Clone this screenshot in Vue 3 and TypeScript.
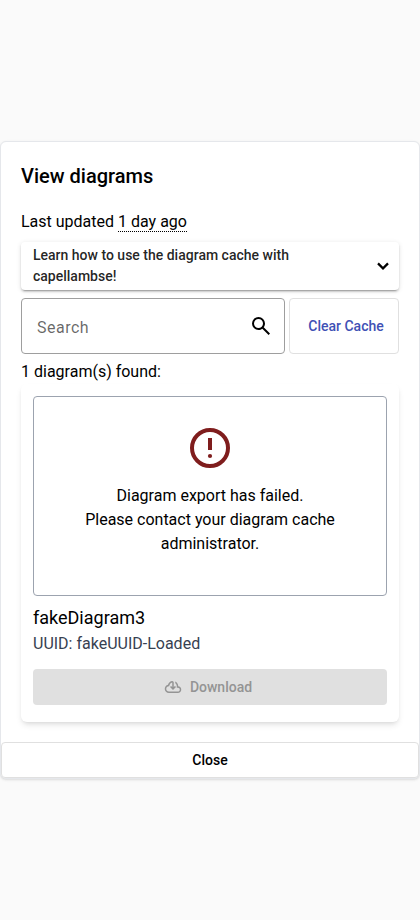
<script setup lang="ts">
import { ref } from 'vue'

interface Diagram {
  name: string
  uuid: string
}

const lastUpdated = ref('1 day ago')
const search = ref('')
const diagrams = ref<Diagram[]>([{ name: 'fakeDiagram3', uuid: 'fakeUUID-Loaded' }])
</script>

<template>
  <main class="page">
    <section class="dialog">
      <div class="content">
        <h2>View diagrams</h2>
        <p class="updated">Last updated <span class="time">{{ lastUpdated }}</span></p>
        <div class="panel">
          <span class="panel-title">Learn how to use the diagram cache with capellambse!</span>
          <svg class="chevron" viewBox="0 0 24 24"><path d="M12 16 6.200 10.200 7.800 8.600 12 12.800 16.200 8.600 17.800 10.200Z" /></svg>
        </div>
        <div class="toolbar">
          <label class="search">
            <input v-model="search" type="text" placeholder="Search" />
            <svg viewBox="0 0 960 960"><path d="M784 840 532 588q-30 24-69 38t-83 14q-109 0-184.500-75.500T120 380q0-109 75.500-184.500T380 120q109 0 184.500 75.500T640 380q0 44-14 83t-38 69l252 252-56 56ZM380 560q75 0 127.500-52.500T560 380q0-75-52.500-127.500T380 200q-75 0-127.500 52.500T200 380q0 75 52.500 127.500T380 560Z" /></svg>
          </label>
          <button class="clear" type="button">Clear Cache</button>
        </div>
        <p class="count">{{ diagrams.length }} diagram(s) found:</p>
        <article v-for="diagram in diagrams" :key="diagram.uuid" class="card">
          <div class="preview">
            <svg viewBox="0 0 48 48">
              <circle cx="24" cy="24" r="18" />
              <path d="M22 14h4v12h-4z" />
              <circle class="dot" cx="24" cy="32" r="2.100" />
            </svg>
            <p>Diagram export has failed.<br />Please contact your diagram cache administrator.</p>
          </div>
          <h3>{{ diagram.name }}</h3>
          <p class="uuid">UUID: {{ diagram.uuid }}</p>
          <button class="download" type="button" disabled>
            <svg viewBox="0 -960 960 960"><path d="M260-160q-91 0-155.500-63T40-377q0-78 47-139t123-78q17-72 85-137t145-65q33 0 56.500 23.500T520-716v242l64-62 56 56-160 160-160-160 56-56 64 62v-242q-76 14-118 73.500T280-520h-20q-58 0-99 41t-41 99q0 58 41 99t99 41h480q42 0 71-29t29-71q0-42-29-71t-71-29h-60v-80q0-48-22-89.500T600-680v-93q74 35 117 103.500T760-520q69 8 114.500 59.500T920-340q0 75-52.500 127.500T740-160H260Z" /></svg>
            <span>Download</span>
          </button>
        </article>
      </div>
      <button class="close" type="button">Close</button>
    </section>
  </main>
</template>

<style>
body {
  background: #fafafa;
}
</style>

<style scoped>
.page,
.page * {
  box-sizing: border-box;
}
.page {
  display: flex;
  align-items: center;
  min-height: 920px;
  font: 400 16px/24px Roboto, sans-serif;
  color: #000;
}
h2, h3, p {
  margin: 0;
}
button {
  font: 500 14px/20px Roboto, sans-serif;
  background: #fff;
  border: 1px solid #e0e0e0;
  border-radius: 4px;
  padding: 0;
}
.dialog {
  width: 100%;
  height: 638px;
  display: flex;
  flex-direction: column;
  background: #fff;
  border: 1px solid #e5e7eb;
  border-radius: 6px;
  box-shadow: 0 1px 3px rgba(0, 0, 0, 0.1), 0 1px 2px -1px rgba(0, 0, 0, 0.1);
}
.content {
  flex: 1;
  padding: 18px 20px 0;
}
h2 {
  font-size: 20px;
  line-height: 32px;
  font-weight: 500;
}
.updated {
  margin-top: 18px;
}
.time {
  border-bottom: 1px dotted #000;
}
.panel {
  display: flex;
  align-items: center;
  justify-content: space-between;
  height: 48px;
  margin-top: 8px;
  padding: 0 4px 0 12px;
  border-radius: 4px;
  box-shadow: 0 3px 1px -2px rgba(0, 0, 0, 0.2), 0 2px 2px 0 rgba(0, 0, 0, 0.14), 0 1px 5px 0 rgba(0, 0, 0, 0.12);
}
.panel-title {
  width: 290px;
  font-size: 14px;
  line-height: 21px;
  font-weight: 500;
  color: rgba(0, 0, 0, 0.87);
}
.chevron {
  width: 24px;
  height: 24px;
}
.toolbar {
  display: flex;
  gap: 4px;
  height: 56px;
  margin-top: 8px;
}
.search {
  display: flex;
  align-items: center;
  width: 264px;
  padding: 0 11px 0 15px;
  border: 1px solid #9e9e9e;
  border-radius: 4px;
}
.search input {
  flex: 1;
  min-width: 0;
  padding: 4px 0 0;
  border: 0;
  outline: 0;
  font: 400 16px/24px Roboto, sans-serif;
  letter-spacing: 0.5px;
  background: transparent;
}
.search input::placeholder {
  color: rgba(0, 0, 0, 0.6);
}
.search svg {
  width: 24px;
  height: 24px;
}
.clear {
  flex: 1;
  padding-left: 4px;
  color: #3f51b5;
}
.count {
  margin-top: 6px;
}
.card {
  height: 338px;
  padding: 12px;
  border-radius: 6px;
  box-shadow: 0 4px 6px -1px rgba(0, 0, 0, 0.1), 0 2px 4px -2px rgba(0, 0, 0, 0.1);
}
.preview {
  display: flex;
  flex-direction: column;
  align-items: center;
  height: 200px;
  padding: 27px 40px 0;
  border: 1px solid #9ca3af;
  border-radius: 4px;
  text-align: center;
}
.preview svg {
  width: 48px;
  height: 48px;
  margin-bottom: 12px;
  fill: #7f1d1d;
}
.preview circle:first-child {
  fill: none;
  stroke: #7f1d1d;
  stroke-width: 4px;
}
h3 {
  margin-top: 8px;
  font-size: 18px;
  line-height: 28px;
  font-weight: 400;
}
.uuid {
  color: #374151;
}
.download {
  display: flex;
  align-items: center;
  justify-content: center;
  gap: 8px;
  width: 100%;
  height: 36px;
  margin-top: 13px;
  padding-right: 4px;
  border: 0;
  background: #e0e0e0;
  color: #949494;
}
.download svg {
  width: 18px;
  height: 18px;
  fill: currentColor;
}
.close {
  height: 36px;
  color: #000;
}
</style>
